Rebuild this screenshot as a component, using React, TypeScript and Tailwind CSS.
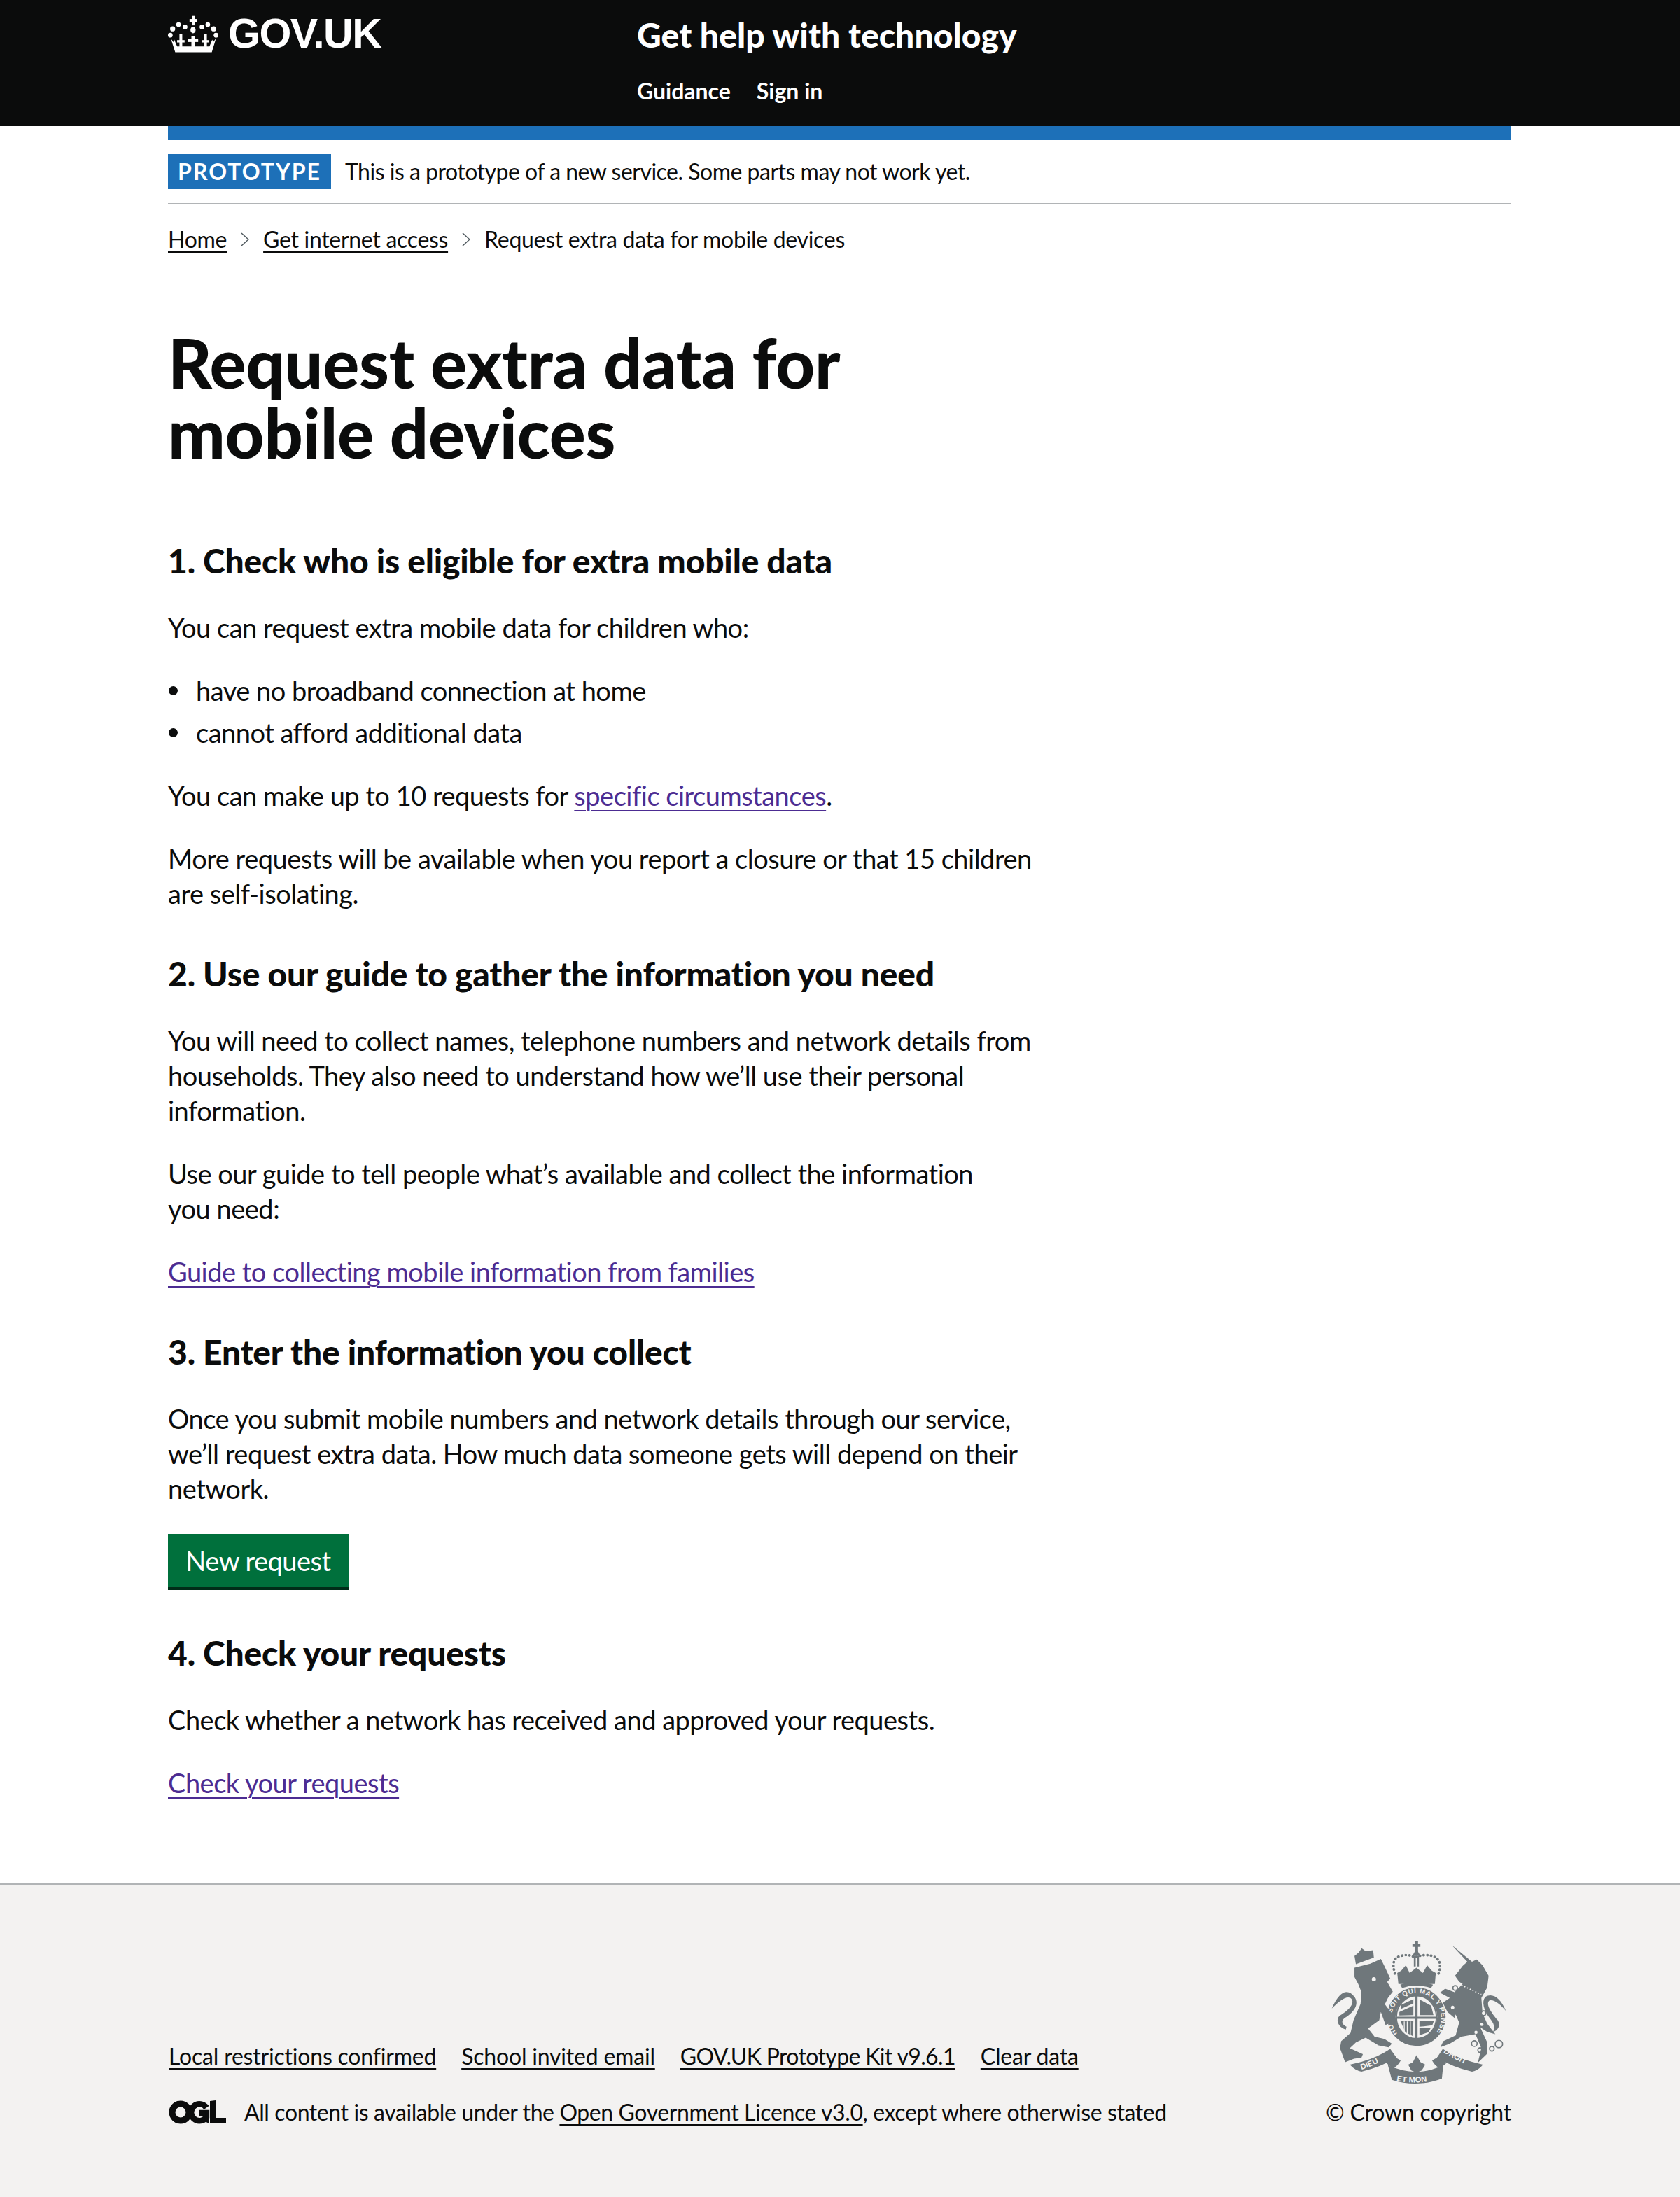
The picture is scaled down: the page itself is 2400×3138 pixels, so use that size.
const body = "mb-10 text-[38px] leading-[50px] tracking-[-0.5px] text-[#0b0c0c]";
const heading = "mb-10 pt-5 text-[48px] leading-[60px] font-black tracking-[-0.2px] text-[#0b0c0c]";
const link = "text-[#4c2c92] underline decoration-2 underline-offset-[6px]";
const blackLink = "text-[#0b0c0c] underline decoration-2 underline-offset-[5px]";
const bullet = "relative before:absolute before:top-[19px] before:left-[-39px] before:size-[13px] before:rounded-full before:bg-[#0b0c0c]";

function Crown() {
  return (
    <svg viewBox="45 33 215 158" className="h-[53px] w-[72px] shrink-0 fill-white">
      <rect x="147" y="35" width="12" height="40" />
      <rect x="137" y="48" width="32" height="12" />
      <ellipse cx="152" cy="95" rx="11" ry="14" />
      <circle cx="90" cy="72" r="10" />
      <circle cx="65" cy="90" r="11" />
      <circle cx="118" cy="82" r="10" />
      <circle cx="190" cy="82" r="10" />
      <circle cx="215" cy="72" r="10" />
      <circle cx="240" cy="90" r="11" />
      <circle cx="55" cy="117" r="10" />
      <circle cx="250" cy="117" r="10" />
      <rect x="145" y="122" width="14" height="45" />
      <rect x="130" y="133" width="44" height="13" />
      <rect x="94" y="112" width="12" height="55" />
      <rect x="84" y="138" width="32" height="10" />
      <rect x="199" y="112" width="12" height="55" />
      <rect x="189" y="138" width="32" height="10" />
      <path d="M57 131 L68 146 L72 136 L84 165 L222 165 L234 136 L238 146 L250 131 L232 190 L76 190 Z" />
    </svg>
  );
}

function Ogl() {
  return (
    <svg viewBox="0 0 82 34" className="h-[34px] w-[82px] shrink-0">
      <circle cx="17" cy="17" r="12" fill="none" stroke="#0b0c0c" strokeWidth="9" />
      <path d="M54 10.5 A12 12 0 1 0 54 24 L54 18 L44 18" fill="none" stroke="#0b0c0c" strokeWidth="8.5" />
      <path d="M53 17 L58 17 L58 33 L51 30 Z" fill="#0b0c0c" />
      <path d="M59 1 L67 0 L67 25 L82 25 L82 33 L59 33 Z" fill="#0b0c0c" />
    </svg>
  );
}

function Crest() {
  return (
    <svg viewBox="130 100 755 620" className="h-[207px] w-[252px] fill-[#6f777b]">
      {/* garter and shield */}
      <circle cx="497" cy="425" r="107" fill="none" stroke="#6f777b" strokeWidth="36" />
      <path id="garter" d="M415 497 A106 106 0 1 1 579 497" fill="none" />
      <text fontFamily="Liberation Sans, sans-serif" fontWeight="700" fontSize="29" fill="#f3f2f1">
        <textPath href="#garter" textLength="470">HONI SOIT QUI MAL Y PENSE</textPath>
      </text>
      <ellipse cx="497" cy="427" rx="86" ry="92" fill="#f3f2f1" stroke="#6f777b" strokeWidth="6" />
      <path d="M492 335 h10 v185 h-10 Z M412 425 h170 v9 h-170 Z" />
      <path d="M430 375 L484 350 L484 368 L430 392 Z M424 405 L484 378 L484 418 L424 420 Z M512 352 L560 378 L570 418 L512 418 Z M510 442 L572 442 L565 462 L510 468 Z M510 474 L558 474 L548 492 L510 504 Z M428 442 L484 442 L482 508 L450 492 Z" />
      <path d="M445 445 L445 490 M458 445 L458 498 M471 445 L471 503" stroke="#f3f2f1" strokeWidth="4" fill="none" />
      {/* crown */}
      <rect x="490" y="102" width="14" height="50" />
      <rect x="480" y="112" width="34" height="14" />
      <path d="M497 135 L515 165 L479 165 Z" />
      <rect x="486" y="165" width="8" height="45" />
      <rect x="500" y="165" width="8" height="45" />
      <path d="M415 238 L432 228 L452 205 L468 238 L497 215 L525 238 L543 205 L563 228 L580 238 L576 285 L420 285 Z" />
      <path d="M428 288 Q497 262 568 288 L560 302 Q497 282 436 302 Z" />
      <path d="M405 240 Q385 175 430 165 Q465 155 490 172 Q530 155 565 165 Q612 180 592 240" fill="none" stroke="#6f777b" strokeWidth="11" strokeDasharray="1 15" strokeLinecap="round" />
      {/* lion */}
      <path d="M232 215 L300 198 L345 178 L362 212 L385 262 L372 276 L396 318 L375 345 L362 372 L395 415 L392 450 L365 460 L345 405 L338 440 L290 475 L318 510 L360 520 L392 540 L378 556 L335 548 L280 515 L238 535 L212 560 L268 585 L262 600 L230 605 L192 620 L170 560 L175 530 L215 495 L228 440 L258 370 L262 320 L248 285 L232 255 Z" />
      <path d="M238 200 L232 165 L250 150 L263 132 L280 145 L312 140 L315 172 Z" />
      <path d="M232 340 C205 305 170 310 135 390 C165 360 195 335 215 345 C240 365 205 400 170 420 C150 435 160 470 195 480 L198 468 C180 458 172 445 190 430 C240 400 250 365 232 340 Z" />
      <circle cx="315" cy="265" r="9" fill="#f3f2f1" />
      {/* unicorn */}
      <path d="M648 118 L735 190 L755 180 L780 205 L806 250 L800 300 L775 345 L780 410 L800 455 L835 500 L800 490 L770 470 L800 535 L798 585 L760 622 L775 560 L750 500 L690 510 L640 540 L600 555 L612 530 L665 505 L680 450 L665 415 L660 430 L630 405 L610 365 L640 345 L598 322 L620 305 L660 320 L695 285 L680 275 L662 250 L695 208 L715 190 Z" />
      <path d="M792 340 C825 320 860 350 880 400 C860 375 830 350 810 355 C790 370 820 410 845 440 C860 462 845 485 825 490 C835 470 830 455 810 430 C785 395 775 360 792 340 Z" />
      <path d="M690 290 L775 330" stroke="#f3f2f1" strokeWidth="5" strokeDasharray="5 8" fill="none" />
      <circle cx="663" cy="302" r="10" fill="#f3f2f1" stroke="#6f777b" strokeWidth="5" />
      <circle cx="652" cy="385" r="10" fill="#f3f2f1" stroke="#6f777b" strokeWidth="5" />
      <circle cx="785" cy="410" r="10" fill="#f3f2f1" stroke="#6f777b" strokeWidth="5" />
      <circle cx="777" cy="458" r="7" fill="#f3f2f1" />
      <circle cx="752" cy="492" r="7" fill="#f3f2f1" />
      <circle cx="745" cy="540" r="12" fill="none" stroke="#6f777b" strokeWidth="5" />
      <circle cx="770" cy="568" r="10" fill="none" stroke="#6f777b" strokeWidth="5" />
      <circle cx="820" cy="562" r="10" fill="none" stroke="#6f777b" strokeWidth="5" />
      <circle cx="850" cy="542" r="16" fill="none" stroke="#6f777b" strokeWidth="5" />
      {/* motto ribbon */}
      <path d="M212 630 L262 618 Q330 600 385 563 L412 600 Q345 640 262 660 Q235 655 212 630 Z" />
      <path d="M782 630 L735 618 Q665 600 610 563 L585 600 Q650 640 735 660 Q762 655 782 630 Z" />
      <path d="M370 625 Q380 600 400 595 L430 612 Q415 640 395 645 Z" />
      <path d="M624 625 Q614 600 594 595 L564 612 Q579 640 599 645 Z" />
      <path d="M375 632 Q497 690 612 632 L606 690 Q497 730 392 695 Z" />
      <path d="M497 590 L515 620 L535 630 L520 655 L497 665 L475 655 L462 630 L482 620 Z" />
      <path id="dieu" d="M262 652 Q325 632 385 592" fill="none" />
      <path id="droit" d="M612 578 Q670 612 738 645" fill="none" />
      <path id="etmon" d="M412 700 Q497 715 585 695" fill="none" />
      <text fontFamily="Liberation Sans, sans-serif" fontWeight="700" fontSize="34" fill="#f3f2f1">
        <textPath href="#dieu">DIEU</textPath>
      </text>
      <text fontFamily="Liberation Sans, sans-serif" fontWeight="700" fontSize="34" fill="#f3f2f1">
        <textPath href="#droit">DROIT</textPath>
      </text>
      <text fontFamily="Liberation Sans, sans-serif" fontWeight="700" fontSize="34" fill="#f3f2f1">
        <textPath href="#etmon">ET MON</textPath>
      </text>
    </svg>
  );
}

export default function App() {
  return (
    <div className="min-h-[3138px] bg-white font-['Lato',sans-serif] text-[#0b0c0c]">
      <header className="h-[180px] bg-[#0b0c0c] pl-[240px] text-white">
        <div className="flex">
          <a className="flex h-[100px] w-[670px] items-center gap-[14px] pb-[4px]">
            <Crown />
            <span className="font-['Liberation_Sans',sans-serif] text-[59px] leading-[60px] font-bold tracking-[-1.5px]">GOV.UK</span>
          </a>
          <div className="pt-[20px]">
            <div className="text-[48px] leading-[60px] font-black tracking-[0.1px]">Get help with technology</div>
            <nav className="mt-[30px] flex gap-[37px] text-[32px] leading-[40px] font-bold">
              <a>Guidance</a>
              <a>Sign in</a>
            </nav>
          </div>
        </div>
      </header>

      <div className="mx-auto w-[1918px] -translate-x-px">
        <div className="h-[20px] bg-[#1d70b8]" />
        <div className="flex items-center gap-[20px] border-b-2 border-[#b1b4b6] py-[20px] text-[32px] tracking-[-0.5px]">
          <strong className="flex h-[50px] w-[233px] items-center justify-center bg-[#1d70b8] text-[32px] leading-none font-bold tracking-[2px] text-white">PROTOTYPE</strong>
          <span className="leading-[40px]">This is a prototype of a new service. Some parts may not work yet.</span>
        </div>

        <nav className="mt-[30px] flex items-center text-[32px] leading-[40px] tracking-[-0.3px]">
          <a className={blackLink}>Home</a>
          <svg viewBox="0 0 12 20" className="mx-[20px] h-[20px] w-[12px] fill-none stroke-[#505a5f] stroke-[1.5]"><path d="M1 1 L11 10 L1 19" /></svg>
          <a className={blackLink}>Get internet access</a>
          <svg viewBox="0 0 12 20" className="mx-[20px] h-[20px] w-[12px] fill-none stroke-[#505a5f] stroke-[1.5]"><path d="M1 1 L11 10 L1 19" /></svg>
          <span>Request extra data for mobile devices</span>
        </nav>

        <main className="mt-[106px] w-[1300px]">
          <h1 className="mb-[83px] text-[97px] leading-[100px] font-black tracking-[-0.2px]">Request extra data for<br />mobile devices</h1>

          <h2 className={heading}>1. Check who is eligible for extra mobile data</h2>
          <p className={body}>You can request extra mobile data for children who:</p>
          <ul className="mb-10 pl-[40px] text-[38px] leading-[50px] tracking-[-0.5px]">
            <li className={`mb-[10px] ${bullet}`}>have no broadband connection at home</li>
            <li className={bullet}>cannot afford additional data</li>
          </ul>
          <p className={body}>You can make up to 10 requests for <a className={link}>specific circumstances</a>.</p>
          <p className={body}>More requests will be available when you report a closure or that 15 children<br />are self-isolating.</p>

          <h2 className={heading}>2. Use our guide to gather the information you need</h2>
          <p className={body}>You will need to collect names, telephone numbers and network details from<br />households. They also need to understand how we’ll use their personal<br />information.</p>
          <p className={body}>Use our guide to tell people what’s available and collect the information<br />you need:</p>
          <p className={body}><a className={link}>Guide to collecting mobile information from families</a></p>

          <h2 className={heading}>3. Enter the information you collect</h2>
          <p className={body}>Once you submit mobile numbers and network details through our service,<br />we’ll request extra data. How much data someone gets will depend on their<br />network.</p>
          <button className="mb-[40px] block h-[80px] w-[258px] border-b-4 border-[#002d18] bg-[#00703c] text-[38px] leading-[50px] tracking-[-0.5px] text-white">New request</button>

          <h2 className={heading}>4. Check your requests</h2>
          <p className={body}>Check whether a network has received and approved your requests.</p>
          <p className={body}><a className={link}>Check your requests</a></p>
        </main>
      </div>

      <footer className="mt-[119px] h-[448px] border-t-2 border-[#b1b4b6] bg-[#f3f2f1] px-[241px] pt-[80px] text-[32px] leading-[40px] tracking-[-0.2px]">
        <div className="flex items-end justify-between">
          <div>
            <ul className="mb-[40px] flex gap-[36px]">
              <li><a className={blackLink}>Local restrictions confirmed</a></li>
              <li><a className={blackLink}>School invited email</a></li>
              <li className="tracking-[-0.65px]"><a className={blackLink}>GOV.UK Prototype Kit v9.6.1</a></li>
              <li><a className={blackLink}>Clear data</a></li>
            </ul>
            <div className="flex items-center gap-[26px] tracking-[-0.4px]">
              <Ogl />
              <span>All content is available under the <a className={blackLink}>Open Government Licence v3.0</a>, except where otherwise stated</span>
            </div>
          </div>
          <div className="flex flex-col items-center">
            <Crest />
            <span className="mt-[18px]">© Crown copyright</span>
          </div>
        </div>
      </footer>
    </div>
  );
}
